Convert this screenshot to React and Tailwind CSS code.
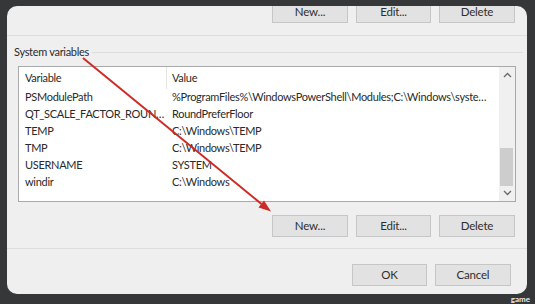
import React from "react"

const font = { fontFamily: 'Lato, "Noto Sans", sans-serif' }

const rows = [
  ["PSModulePath", "%ProgramFiles%\\WindowsPowerShell\\Modules;C:\\Windows\\system32\\WindowsPowerShell\\v1.0\\Modules"],
  ["QT_SCALE_FACTOR_ROUNDING_POLICY", "RoundPreferFloor"],
  ["TEMP", "C:\\Windows\\TEMP"],
  ["TMP", "C:\\Windows\\TEMP"],
  ["USERNAME", "SYSTEM"],
  ["windir", "C:\\Windows"],
]

function Button({ children, className = "" }) {
  return (
    <div
      className={
        "flex h-[22px] items-center justify-center border border-[#c6c6c6] bg-[#e2e2e2] text-[11.5px] tracking-[-0.2px] text-[#2e2e2e] " +
        className
      }
    >
      {children}
    </div>
  )
}

function Chevron({ up }) {
  return (
    <svg width="9" height="6" viewBox="0 0 9 6">
      <path
        d={up ? "M1 5 L4.5 1.5 L8 5" : "M1 1 L4.5 4.5 L8 1"}
        fill="none"
        stroke="#6a6a6a"
        strokeWidth="1.3"
      />
    </svg>
  )
}

export default function App() {
  return (
    <div
      className="relative h-[304px] w-[535px] overflow-hidden bg-[#353739] pl-[7px] pt-[6px]"
      style={font}
    >
      <div className="flex h-[288px] w-[520px] flex-col overflow-hidden rounded-[10px] bg-[#efefef]">
        <div className="mt-[-5px] flex justify-end gap-2 pr-[12px]">
          <Button className="w-[76px]">New...</Button>
          <Button className="w-[75px]">Edit...</Button>
          <Button className="w-[76px]">Delete</Button>
        </div>

        <div className="mt-[12px] h-px bg-[#dddddd]" />

        <div className="mt-[9px] flex h-[14px] items-center pl-[7px]">
          <span className="text-[11px] tracking-[-0.3px] text-[#2a2a2a]">System variables</span>
          <div className="ml-[3px] mr-[4px] h-px flex-1 bg-[#dddddd]" />
        </div>

        <div className="ml-[11px] mt-[7px] flex h-[136px] w-[498px] border border-[#a9a9a9] bg-white">
          <div className="flex min-w-0 flex-1 flex-col text-[11px] tracking-[-0.3px] text-[#2a2a2a]">
            <div className="flex h-[22px] items-center">
              <div className="flex h-full w-[148px] items-center border-r border-[#e5e5e5] pl-[6px]">
                Variable
              </div>
              <div className="pl-[5px]">Value</div>
            </div>
            {rows.map(([name, value]) => (
              <div key={name} className="flex h-[17px] items-center">
                <div className="w-[148px] truncate pl-[6px] pr-[2px]">{name}</div>
                <div className="min-w-0 flex-1 truncate pl-[5px] pr-[10px]">{value}</div>
              </div>
            ))}
          </div>
          <div className="flex w-[16px] flex-col bg-[#f0f0f0]">
            <div className="flex h-[17px] items-center justify-center">
              <Chevron up />
            </div>
            <div className="flex-1">
              <div className="ml-[1px] mr-[2px] mt-[65px] h-[38px] bg-[#cdcdcd]" />
            </div>
            <div className="flex h-[17px] items-center justify-center">
              <Chevron />
            </div>
          </div>
        </div>

        <div className="mt-[13px] flex justify-end gap-2 pr-[12px]">
          <Button className="w-[76px]">New...</Button>
          <Button className="w-[75px]">Edit...</Button>
          <Button className="w-[76px]">Delete</Button>
        </div>

        <div className="mt-[11px] h-px bg-[#dddddd]" />

        <div className="mt-[15px] flex justify-end gap-2 pr-[16px]">
          <Button className="w-[75px]">OK</Button>
          <Button className="w-[76px]">Cancel</Button>
        </div>
      </div>

      <div className="flex justify-end pr-[5px] pt-[1px]">
        <span className="text-[8px] font-bold leading-[8px] text-[#e8e8e8]">game</span>
      </div>

      <svg className="pointer-events-none absolute left-0 top-0" width="535" height="304">
        <line x1="83" y1="58" x2="261.5" y2="204" stroke="#cf2b26" strokeWidth="2" />
        <polygon points="271,211.5 264,200.4 258.5,207.4" fill="#cf2b26" />
      </svg>
    </div>
  )
}
